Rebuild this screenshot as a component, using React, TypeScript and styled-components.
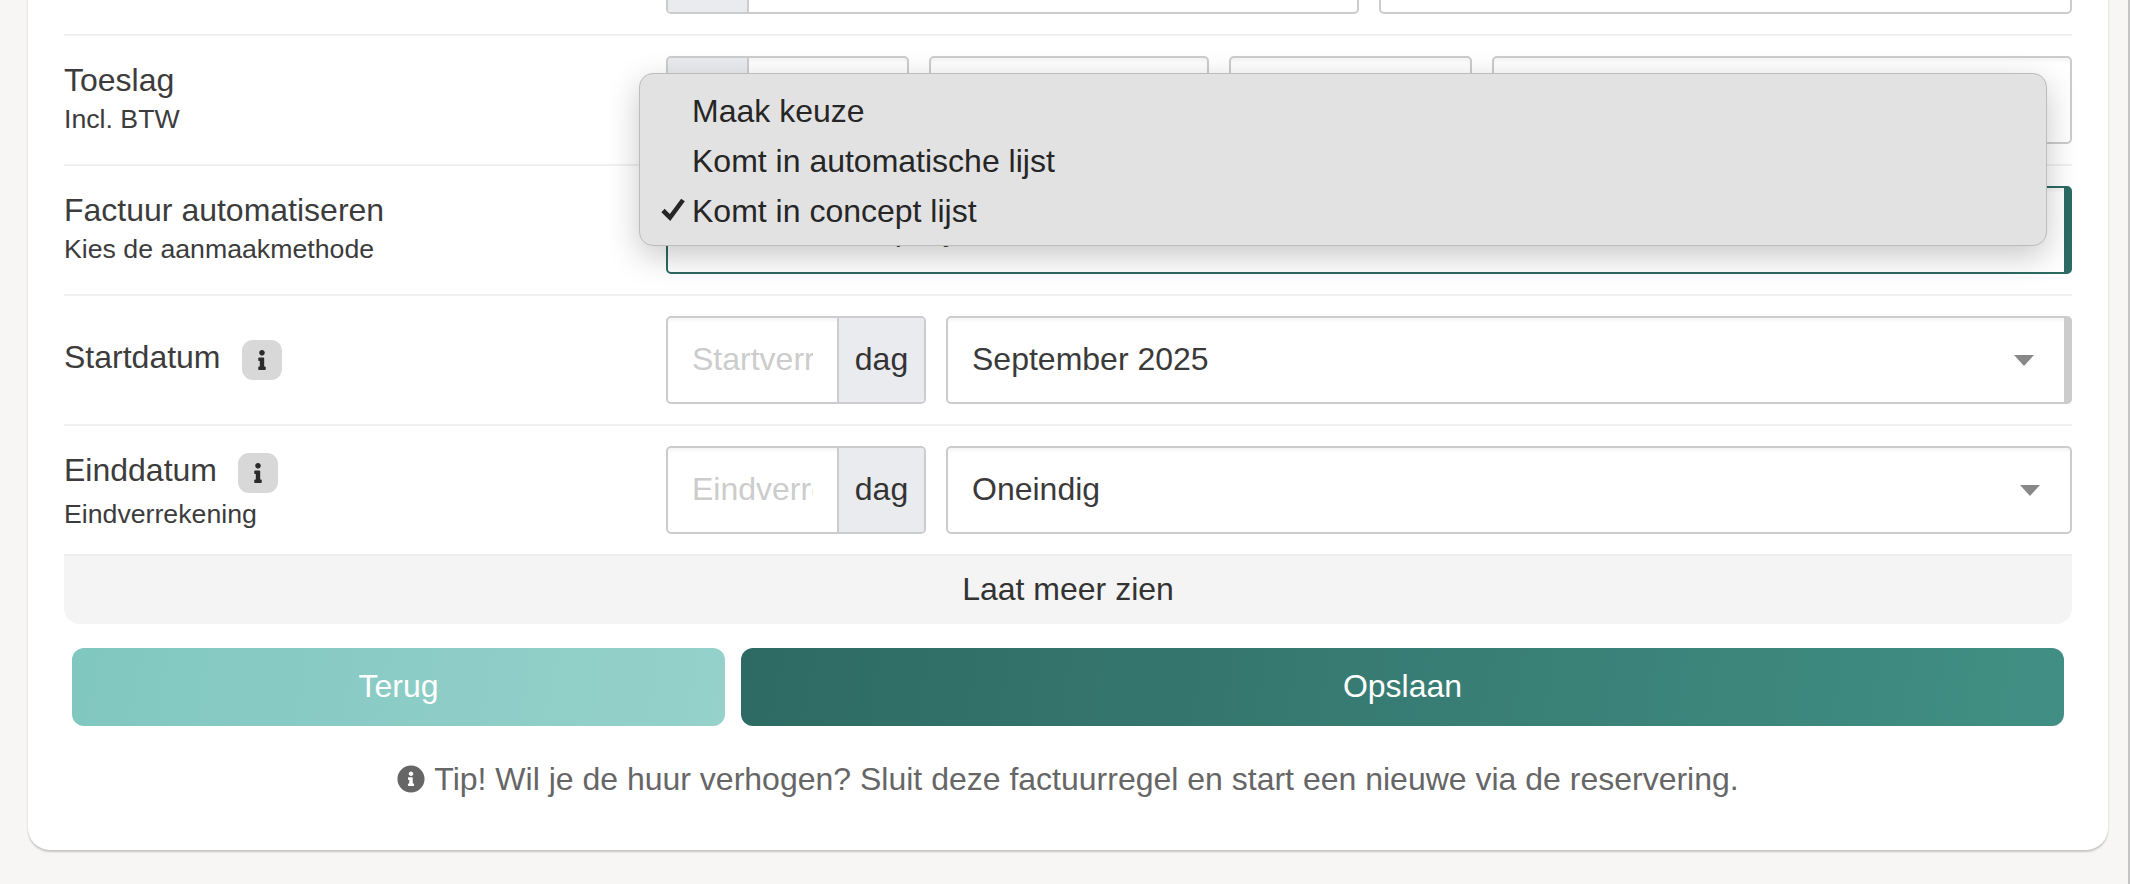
import React from 'react'
import styled, { createGlobalStyle } from 'styled-components'
import { FaInfo, FaInfoCircle } from 'react-icons/fa'

const GlobalStyle = createGlobalStyle`
  html, body {
    margin: 0;
    padding: 0;
    height: 100%;
    background: #f7f6f4;
  }
  * {
    box-sizing: border-box;
  }
`

const Page = styled.div`
  height: 884px;
  overflow: hidden;
  display: flex;
  flex-direction: column;
  justify-content: flex-end;
  padding: 0 20px 34px 28px;
  background: #f7f6f4;
  border-right: 2px solid #c4c4c4;
  font-family: "Liberation Sans", Arial, sans-serif;
  color: #333;
`

const Card = styled.div`
  flex: none;
  background: #fff;
  border-radius: 0 0 22px 22px;
  box-shadow: 0 2px 2px rgba(0, 0, 0, 0.2);
  padding: 0 36px;
`

const Row = styled.div`
  display: grid;
  grid-template-columns: 602px 1fr;
  padding: 20px 0;
  border-bottom: ${p => (p.$last ? 'none' : '2px solid #f0f0f0')};
  height: ${p => (p.$last ? '128px' : '130px')};
`

const LabelCell = styled.div`
  display: flex;
  flex-direction: column;
  justify-content: center;
`

const Title = styled.div`
  display: flex;
  align-items: center;
  gap: 21px;
  height: 40px;
  margin-top: ${p => (p.$pushed ? '4px' : '0')};
  font-size: 32px;
  color: #3c3c3c;
`

const TitleText = styled.span`
  line-height: 34px;
  padding-bottom: 6px;
`

const Hint = styled.div`
  font-size: 26.7px;
  line-height: 32px;
  padding-bottom: 2px;
  margin-top: ${p => (p.$spaced ? '5px' : '0')};
  color: #3c3c3c;
`

const InfoBadge = styled.span`
  display: inline-flex;
  align-items: center;
  justify-content: center;
  width: 40px;
  height: 40px;
  border-radius: 11px;
  background: #d8d8d8;
  color: #2b2b2b;
  font-size: 20px;
`

const Fields = styled.div`
  display: grid;
  grid-template-columns: ${p => p.$columns};
  column-gap: 20px;
  height: 88px;
`

const InputGroup = styled.div`
  display: flex;
  min-width: 0;
  border: 2px solid #ccc;
  border-radius: 5px;
  overflow: hidden;
  box-shadow: inset 0 4px 3px -1px rgba(0, 0, 0, 0.04);
`

const Addon = styled.span`
  flex: none;
  display: flex;
  align-items: center;
  justify-content: center;
  width: ${p => p.$width};
  padding-bottom: 2px;
  background: #eaebef;
  font-size: 32px;
  color: #333;
  border-left: ${p => (p.$side === 'right' ? '2px solid #ccc' : 'none')};
  border-right: ${p => (p.$side === 'left' ? '2px solid #ccc' : 'none')};
`

const TextInput = styled.input`
  flex: 1;
  min-width: 0;
  height: 100%;
  border: none;
  outline: none;
  padding: 0 24px 2px;
  background: transparent;
  font-family: inherit;
  font-size: 32px;
  color: #333;
  &::placeholder {
    color: #ccc;
    opacity: 1;
  }
`

const SelectBox = styled.div`
  position: relative;
  display: flex;
  align-items: center;
  justify-content: space-between;
  min-width: 0;
  padding: 0 30px 2px 24px;
  border: 2px solid ${p => (p.$focused ? '#2c6a63' : '#ccc')};
  border-right-width: ${p => (p.$thick ? '8px' : '2px')};
  border-radius: 5px;
  font-size: 32px;
  color: #3a3a3a;
  box-shadow: inset 0 4px 3px -1px rgba(0, 0, 0, 0.04);
`

const Caret = styled.span`
  flex: none;
  width: 0;
  height: 0;
  margin-top: 2px;
  border-left: 10px solid transparent;
  border-right: 10px solid transparent;
  border-top: 11px solid #888;
`

const Menu = styled.div`
  position: absolute;
  top: -115px;
  left: -29px;
  right: 17px;
  z-index: 5;
  padding: 12px 0 9px 52px;
  background: #e2e2e2;
  border: 1px solid #bcbcbc;
  border-radius: 14px;
  box-shadow: 0 10px 32px rgba(0, 0, 0, 0.22);
`

const MenuOption = styled.div`
  position: relative;
  font-size: 32px;
  line-height: 50px;
  color: #262626;
`

const Tick = styled.svg`
  position: absolute;
  left: -31px;
  top: 11px;
  width: 24px;
  height: 24px;
`

const MoreBar = styled.div`
  display: flex;
  align-items: center;
  justify-content: center;
  height: 70px;
  padding-bottom: 2px;
  background: #f4f4f4;
  border-top: 2px solid #eee;
  border-radius: 0 0 16px 16px;
  font-size: 32px;
  color: #333;
`

const Actions = styled.div`
  display: grid;
  grid-template-columns: 653px 1fr;
  column-gap: 16px;
  margin-top: 24px;
  padding: 0 8px;
`

const ActionButton = styled.button`
  height: 78px;
  padding: 0 0 2px;
  border: none;
  border-radius: 12px;
  color: #fff;
  font-family: inherit;
  font-size: 32px;
  background: ${p =>
    p.$primary
      ? 'linear-gradient(100deg, #2e6a64, #418f84)'
      : 'linear-gradient(100deg, #80c7c0, #96d1cb)'};
`

const Tip = styled.div`
  display: flex;
  align-items: center;
  justify-content: center;
  gap: 9px;
  height: 46px;
  margin: 30px 0 48px;
  font-size: 32px;
  color: #666;
  svg {
    font-size: 28px;
  }
`

const App: React.FC = () => {
  return (
    <>
      <GlobalStyle />
      <Page>
        <Card>
          <Row>
            <LabelCell />
            <Fields $columns="693px 1fr">
              <InputGroup>
                <Addon $side="left" $width="81px" />
                <TextInput />
              </InputGroup>
              <InputGroup>
                <TextInput />
              </InputGroup>
            </Fields>
          </Row>

          <Row>
            <LabelCell>
              <Title>
                <TitleText>Toeslag</TitleText>
              </Title>
              <Hint>Incl. BTW</Hint>
            </LabelCell>
            <Fields $columns="243px 280px 243px 1fr">
              <InputGroup>
                <Addon $side="left" $width="81px" />
                <TextInput />
              </InputGroup>
              <InputGroup>
                <TextInput />
              </InputGroup>
              <InputGroup>
                <TextInput />
              </InputGroup>
              <InputGroup>
                <TextInput />
              </InputGroup>
            </Fields>
          </Row>

          <Row>
            <LabelCell>
              <Title>
                <TitleText>Factuur automatiseren</TitleText>
              </Title>
              <Hint>Kies de aanmaakmethode</Hint>
            </LabelCell>
            <Fields $columns="1fr">
              <SelectBox $focused $thick>
                Komt in concept lijst
                <Menu>
                  <MenuOption>Maak keuze</MenuOption>
                  <MenuOption>Komt in automatische lijst</MenuOption>
                  <MenuOption>
                    <Tick viewBox="0 0 24 24">
                      <path d="M2 13.5 L9 20.5 L22 3" fill="none" stroke="#262626" strokeWidth="4.6" />
                    </Tick>
                    Komt in concept lijst
                  </MenuOption>
                </Menu>
              </SelectBox>
            </Fields>
          </Row>

          <Row>
            <LabelCell>
              <Title>
                <TitleText>Startdatum</TitleText>
                <InfoBadge>
                  <FaInfo />
                </InfoBadge>
              </Title>
            </LabelCell>
            <Fields $columns="260px 1fr">
              <InputGroup>
                <TextInput placeholder="Startverrekening" />
                <Addon $side="right" $width="87px">dag</Addon>
              </InputGroup>
              <SelectBox $thick>
                September 2025
                <Caret />
              </SelectBox>
            </Fields>
          </Row>

          <Row $last>
            <LabelCell>
              <Title $pushed>
                <TitleText>Einddatum</TitleText>
                <InfoBadge>
                  <FaInfo />
                </InfoBadge>
              </Title>
              <Hint $spaced>Eindverrekening</Hint>
            </LabelCell>
            <Fields $columns="260px 1fr">
              <InputGroup>
                <TextInput placeholder="Eindverrekening" />
                <Addon $side="right" $width="87px">dag</Addon>
              </InputGroup>
              <SelectBox>
                Oneindig
                <Caret />
              </SelectBox>
            </Fields>
          </Row>

          <MoreBar>Laat meer zien</MoreBar>

          <Actions>
            <ActionButton>Terug</ActionButton>
            <ActionButton $primary>Opslaan</ActionButton>
          </Actions>

          <Tip>
            <FaInfoCircle />
            Tip! Wil je de huur verhogen? Sluit deze factuurregel en start een nieuwe via de reservering.
          </Tip>
        </Card>
      </Page>
    </>
  )
}

export default App
